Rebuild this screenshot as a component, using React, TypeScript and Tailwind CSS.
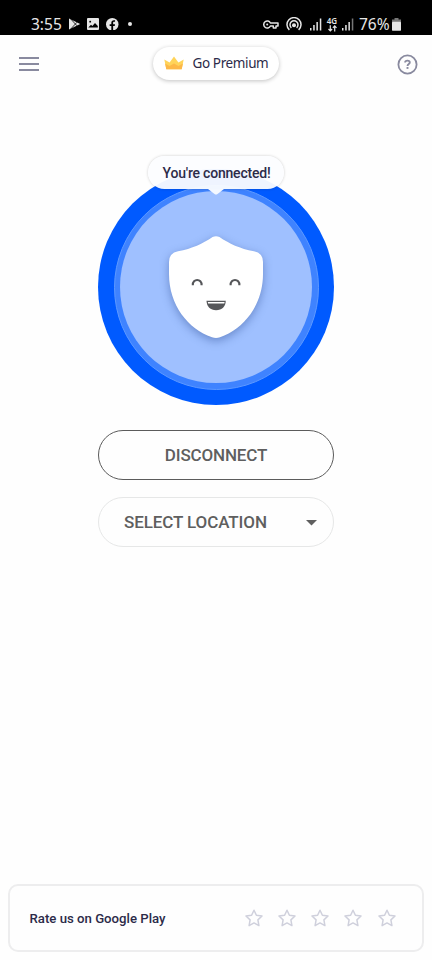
const STARS = [1, 2, 3, 4, 5];

function SignalBars({ dim }: { dim?: boolean }) {
  return (
    <svg width="12" height="13" viewBox="0 0 12 13" fill="#e6e6e6" className="shrink-0">
      <rect x="0" y="10" width="1.5" height="2.5" />
      <rect x="3.2" y="7" width="1.5" height="5.5" />
      <rect x="6.4" y="4" width="1.5" height="8.5" />
      <rect x="9.8" y="0.5" width="1.5" height="12" fill={dim ? '#777777' : '#e6e6e6'} />
    </svg>
  );
}

function StatusBar() {
  return (
    <div className="flex h-[35px] items-start bg-black pl-[31px] pt-[14px] text-[#e6e6e6] font-['Noto_Sans',sans-serif]">
      <span className="w-[37px] whitespace-nowrap text-[15.5px] leading-[21px]">3:55</span>
      <div className="flex h-[20px] items-center">
        {/* Play store */}
        <svg width="13" height="12" viewBox="0 0 13 12" className="mr-[6px]">
          <path d="M1 .5 L12.2 6 L1 11.5 Z" fill="#e6e6e6" />
          <path d="M2.4 .6 L9 7.8 M2.4 11.4 L9 4.2" stroke="#000" strokeWidth=".8" />
          <path d="M1 .8 L6 6 L1 11.2 Z" fill="#e6e6e6" />
        </svg>
        {/* Gallery */}
        <svg width="12" height="12" viewBox="0 0 12 12" className="mr-[7px]">
          <rect width="12" height="12" rx="1" fill="#e6e6e6" />
          <path d="M1.3 9.6 L4 6.8 L5.4 8 L8 5 L10.8 8 V9.6 Z" fill="#000" />
          <rect x="2.3" y="2.8" width="1.8" height="1.8" rx=".6" fill="#000" />
        </svg>
        {/* Facebook */}
        <svg width="12.5" height="12.5" viewBox="0 0 24 24" className="mr-[9px]">
          <circle cx="12" cy="12" r="12" fill="#e6e6e6" />
          <path
            d="M10.2 24 v-8.6 H7 V11.8 h3.2 V9.2 C10.2 5.9 12.1 4.2 15 4.2 c1.3 0 2.4.2 2.4.2 v3 h-1.7 c-1.5 0-2 .9-2 1.9 v2.5 h3.6 l-.6 3.6 h-3 V24 Z"
            fill="#000"
          />
        </svg>
        <span className="size-1 rounded-full bg-[#e6e6e6]" />
      </div>
      <div className="ml-auto flex h-[20px] w-[169px] items-center">
        {/* VPN key */}
        <svg width="16" height="9" viewBox="0 0 16 9" fill="none" stroke="#e6e6e6" strokeWidth="1.5" className="mr-[7px] shrink-0">
          <path d="M7.4 3 A3.5 3.5 0 1 0 7.4 6 H10.3 V8 H13 V6 H15 V3 Z" strokeLinejoin="round" />
          <circle cx="4.2" cy="4.5" r="1" fill="#e6e6e6" stroke="none" />
        </svg>
        {/* Hotspot */}
        <svg width="16" height="14" viewBox="0 0 16 14" fill="none" stroke="#e6e6e6" strokeWidth="1.5" className="mr-[8px] shrink-0">
          <path d="M3.4 12.9 A7 7 0 1 1 12.6 12.9" />
          <path d="M5.4 10.9 A4 4 0 1 1 10.6 10.9" />
          <circle cx="8" cy="8.2" r="2" fill="#e6e6e6" stroke="none" />
        </svg>
        <SignalBars />
        <div className="ml-[4px] mr-[4px] flex h-[15px] w-[12px] flex-col items-center">
          <span className="text-[8px] font-semibold leading-[8px]">4G</span>
          <svg width="9" height="7" viewBox="0 0 9 7" fill="none" stroke="#e6e6e6" strokeWidth="1.2">
            <path d="M2.3 .2 V5.8 M.5 4 L2.3 5.9 L4.1 4 M6.7 6.6 V1 M4.9 2.8 L6.7 .9 L8.5 2.8" />
          </svg>
        </div>
        <SignalBars dim />
        <span className="ml-[5px] w-[33px] whitespace-nowrap text-[15.5px] leading-[20px]">76%</span>
        <svg width="9" height="13" viewBox="0 0 9 13" className="shrink-0">
          <path d="M2.5 0 H6.5 V1.5 H9 V4 H0 V1.5 H2.5 Z" fill="#777777" />
          <rect y="3.7" width="9" height="9" rx=".6" fill="#e6e6e6" />
        </svg>
      </div>
    </div>
  );
}

function Header() {
  return (
    <header className="flex h-[58px] items-center justify-between pl-[19px] pr-[14px]">
      <button className="flex w-[21px] flex-col gap-[4px]">
        <span className="h-[2px] w-[20px] bg-[#898a9f]" />
        <span className="h-[2px] w-[20px] bg-[#898a9f]" />
        <span className="h-[2px] w-[20px] bg-[#898a9f]" />
      </button>
      <button className="-ml-[5px] mb-[2px] flex h-[33px] w-[126px] items-center rounded-full bg-white pl-[11px] shadow-[0_1px_4px_rgba(0,0,0,0.24)]">
        <svg width="20" height="14" viewBox="0 0 20 14" className="mr-[8.5px]">
          <path d="M.3 3.4 L5.6 6.6 L10 .4 L14.4 6.6 L19.7 3.4 L17.7 13.2 H2.3 Z" fill="#ffd45a" />
          <path d="M1.1 7.5 L5.5 10 L10 7.4 L14.5 10 L18.9 7.5 L17.7 13.2 H2.3 Z" fill="#fdb848" />
        </svg>
        <span className="whitespace-nowrap text-[13.5px] leading-5 tracking-[-0.38px] text-[#2c2b49] font-['Noto_Sans',sans-serif]">Go Premium</span>
      </button>
      <svg width="21" height="21" viewBox="0 0 21 21" fill="none" stroke="#898a9f" className="mt-[1px]">
        <circle cx="10.5" cy="10.5" r="9.1" strokeWidth="1.8" />
        <path d="M8.1 8.4 C8.1 5.9 12.8 5.9 12.8 8.4 C12.8 10 10.5 9.9 10.5 11.9" strokeWidth="1.8" />
        <path d="M10.5 13 V14.9" strokeWidth="1.9" />
      </svg>
    </header>
  );
}

function Shield() {
  return (
    <svg width="94" height="102" viewBox="0 0 94 102" className="overflow-visible drop-shadow-[0_3px_5px_rgba(40,70,140,0.45)]">
      <path
        d="M43.5 1 Q47 -.7 50.5 1 C60 7.5 71 12.8 85 15.2 Q94 17 94 26 V38 C94 69 75 93 51 101.2 Q47 102.6 43 101.2 C19 93 0 69 0 38 V26 Q0 17 9 15.2 C23 12.8 34 7.5 43.5 1 Z"
        fill="#fff"
      />
      <g fill="none" stroke="#555659" strokeWidth="2.1">
        <path d="M23.8 49.2 C23.4 42.2 33 42.2 32.6 49.2" />
        <path d="M61.6 49.2 C61.2 42.2 70.8 42.2 70.4 49.2" />
      </g>
      <path d="M37.5 64.8 H56.8 C56.6 70.6 53 74.2 47.1 74.2 C41.3 74.2 37.7 70.6 37.5 64.8 Z" fill="#555659" />
      <path d="M38.8 66 H55.6 L55.3 67.6 H39.1 Z" fill="#fff" />
    </svg>
  );
}

function ConnectionStatus() {
  return (
    <div className="relative mx-auto mt-[76px] flex size-[236px] items-center justify-center rounded-full bg-[#005aff]">
      <div className="flex size-[205px] items-center justify-center rounded-full border border-[#5d99ff] bg-[#3f83ff]">
        <div className="flex size-[192px] items-center justify-center rounded-full bg-[#9fc0ff]">
          <Shield />
        </div>
      </div>
      {/* Speech bubble */}
      <div className="absolute left-[50px] top-[-13px] flex h-[32.5px] w-[136px] items-center justify-center rounded-full bg-[#fcfdff]/95 shadow-[0_0_3px_rgba(0,0,0,0.2)]">
        <span className="whitespace-nowrap pt-[1px] pl-[1px] text-[14px] font-medium leading-5 tracking-[-0.2px] text-[#2c2b49]">You're connected!</span>
        <svg width="16" height="6" viewBox="0 0 16 6" className="absolute left-[60px] top-[32.5px]">
          <path d="M0 0 H16 L9.5 5 Q8 6 6.5 5 Z" fill="#f4f8ff" />
        </svg>
      </div>
    </div>
  );
}

function RatingCard() {
  return (
    <div className="mx-[8px] mb-[8px] mt-auto flex h-[68px] items-center justify-between rounded-[10px] border-2 border-[#ededee] pl-[19.5px] pr-[26.5px]">
      <span className="whitespace-nowrap pt-[1px] text-[13.2px] font-medium leading-5 text-[#2c2b49]">Rate us on Google Play</span>
      <div className="flex gap-[15.2px]">
        {STARS.map((n) => (
          <svg key={n} width="18" height="18" viewBox="0 0 18 18" fill="none" stroke="#cfd0dc" strokeWidth="1.5" strokeLinejoin="round">
            <path d="M9 1.2 L11.4 6.3 L17 7 L12.9 10.9 L13.9 16.6 L9 13.9 L4.1 16.6 L5.1 10.9 L1 7 L6.6 6.3 Z" />
          </svg>
        ))}
      </div>
    </div>
  );
}

export default function App() {
  return (
    <div className="flex h-[960px] w-[432px] flex-col overflow-hidden bg-[#fefefe] font-[Roboto,sans-serif]">
      <StatusBar />
      <Header />

      {/* Main content */}
      <ConnectionStatus />
      <button className="mx-auto mt-[25px] flex h-[50px] w-[236px] shrink-0 items-center justify-center rounded-full border border-[#5b5b5b] pt-[2px] text-[17px] font-medium tracking-[-0.15px] text-[#5f5f5f]">
        DISCONNECT
      </button>
      <button className="mx-auto mt-[17px] flex h-[50px] w-[236px] shrink-0 items-center justify-between rounded-full border border-[#e6e7e7] pl-[25px] pr-[16px] pt-[2px] text-[17px] font-medium tracking-[-0.1px] text-[#5f5f5f]">
        SELECT LOCATION
        <svg width="11" height="6" viewBox="0 0 11 6" fill="#5f5f5f">
          <path d="M0 0 H11 L5.5 5.5 Z" />
        </svg>
      </button>

      <RatingCard />
    </div>
  );
}
